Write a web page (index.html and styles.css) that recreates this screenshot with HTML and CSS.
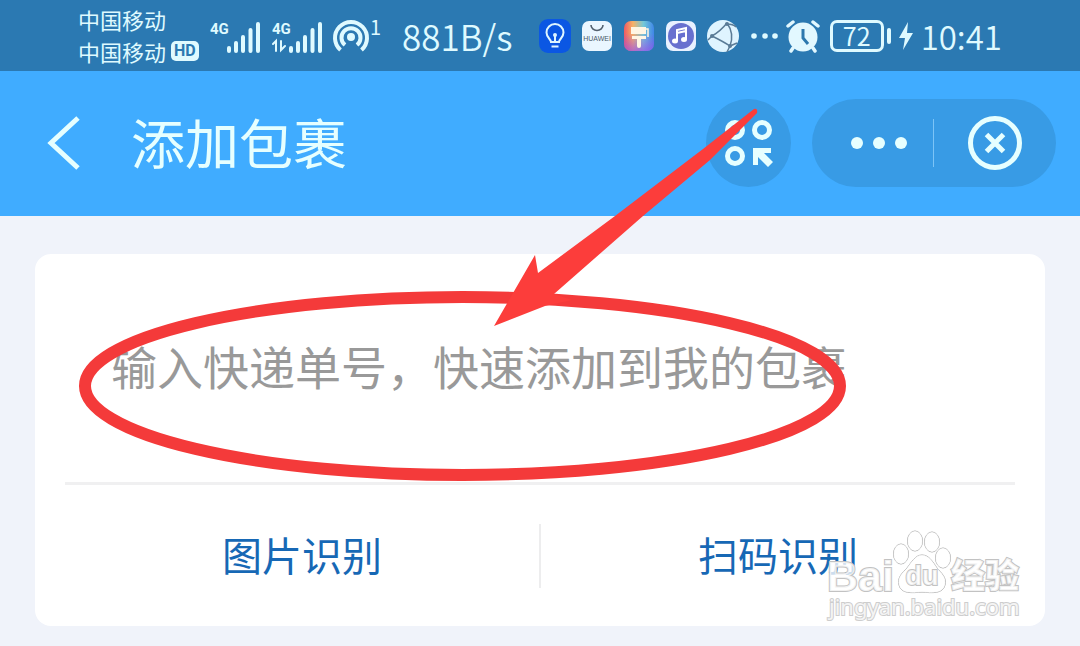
FILE: index.html
```
<!DOCTYPE html>
<html lang="zh-CN">
<head>
    <meta charset="utf-8">
    <meta name="viewport" content="width=device-width, initial-scale=1">
    <title>添加包裹</title>
    <link rel="stylesheet" href="styles.css">
</head>
<body>
    <div class="status-bar">
        <div class="status-left">
            <div class="carriers">
                <div>中国移动</div>
                <div>中国移动 <span class="hd">HD</span></div>
            </div>
            <svg class="signal" width="52" height="34" viewBox="0 0 52 34">
                <text x="0" y="15">4G</text>
                <path d="M19 32v-3M26 32v-8M33 32v-14M40.500 32v-21M48 32v-27"/>
            </svg>
            <svg class="signal" width="52" height="34" viewBox="0 0 52 34">
                <text x="0" y="15">4G</text>
                <path d="M19 32v-3M26 32v-8M33 32v-14M40.500 32v-21M48 32v-27"/>
                <path class="thin" d="M1 25l3-3v10M9 22v9l4-4"/>
            </svg>
            <svg class="hotspot" width="48" height="44" viewBox="0 -4 48 44">
                <path d="M6.500 32a16 16 0 1 1 21 0M11 27a9.500 9.500 0 1 1 12 0"/>
                <circle cx="17" cy="19" r="4"/>
                <text x="36" y="17">1</text>
            </svg>
            <div class="speed">881B/s</div>
        </div>
        <div class="status-right">
            <div class="apps">
                <svg width="32" height="34" viewBox="0 0 32 34">
                    <rect width="32" height="34" rx="9" fill="#0b57e3"/>
                    <path d="M12 23c0-3-4.500-4-4.500-9.500a8.500 8.500 0 0 1 17 0c0 5.500-4.500 6.500-4.500 9.500zM12.500 27.500h7M16 23v-6" fill="none" stroke="#dff6ff" stroke-width="2"/>
                    <circle cx="16" cy="16" r="2" fill="#dff6ff"/>
                </svg>
                <svg width="32" height="34" viewBox="0 0 32 34">
                    <rect x="1" y="2" width="30" height="30" rx="7" fill="#eaf6ff"/>
                    <path d="M10 6a6 5.500 0 0 0 12 0" fill="none" stroke="#52606e" stroke-width="1.600"/>
                    <text x="16" y="22" text-anchor="middle" font-size="7" fill="#4b5a6a">HUAWEI</text>
                </svg>
                <svg width="32" height="34" viewBox="0 0 32 34">
                    <defs>
                        <linearGradient id="hue">
                            <stop offset="0" stop-color="#ee5a62"/>
                            <stop offset=".3" stop-color="#f7b267"/>
                            <stop offset=".65" stop-color="#73c8d8"/>
                            <stop offset="1" stop-color="#3f86e8"/>
                        </linearGradient>
                        <linearGradient id="violet" x2="0" y2="1">
                            <stop offset=".4" stop-color="#9b4bea" stop-opacity="0"/>
                            <stop offset="1" stop-color="#9b4bea" stop-opacity=".7"/>
                        </linearGradient>
                    </defs>
                    <rect x="1" y="2" width="30" height="30" rx="7" fill="url(#hue)"/>
                    <rect x="1" y="2" width="30" height="30" rx="7" fill="url(#violet)"/>
                    <path d="M8 8h15v7H8zM9 17h14v3h-5v7a2 2 0 0 1-4 0v-7H9z" fill="#fff5e4"/>
                    <path d="M22 10h3v8" fill="none" stroke="#fff5e4" stroke-width="1.500"/>
                </svg>
                <svg width="32" height="34" viewBox="0 0 32 34">
                    <rect x="1" y="2" width="30" height="30" rx="7" fill="#e9f1ff"/>
                    <circle cx="16" cy="17" r="13" fill="#6870cf"/>
                    <path d="M12 22V11l9-2v11M12 14l9-2" fill="none" stroke="#fff" stroke-width="2"/>
                    <ellipse cx="10" cy="22" rx="3" ry="2.500" fill="#fff"/>
                    <ellipse cx="19" cy="20.500" rx="3" ry="2.500" fill="#fff"/>
                </svg>
                <svg width="32" height="34" viewBox="0 0 32 34">
                    <circle cx="16" cy="17" r="16" fill="#dff4ff"/>
                    <path d="M20 4C16 9 12 13 5 17M5 17c6 3 12 6 18 10M20 4c5 7 6 15 3 23M20 5c4 0 7 1 9 3M5 17c-2 2-3 3-4 4M23 27l-3 6M23 27l7-3" fill="none" stroke="#5a7b96" stroke-width="1.500"/>
                    <circle cx="20" cy="5" r="2" fill="#5a7b96"/>
                    <circle cx="5" cy="17" r="2" fill="#5a7b96"/>
                    <circle cx="23" cy="27" r="2" fill="#5a7b96"/>
                </svg>
            </div>
            <svg width="28" height="8" viewBox="0 0 28 8" fill="#dffaff">
                <circle cx="4" cy="4" r="2.800"/>
                <circle cx="15" cy="4" r="2.800"/>
                <circle cx="25" cy="4" r="2.800"/>
            </svg>
            <svg width="36" height="34" viewBox="0 0 36 34">
                <circle cx="18" cy="18" r="14.500" fill="#e2f8ff"/>
                <path d="M3 7l5-4M33 7l-5-4M8 29l-2 3M28 29l2 3" stroke="#e2f8ff" stroke-width="3.500" stroke-linecap="round"/>
                <path d="M18 10v9l5 6" fill="none" stroke="#2d78ae" stroke-width="3"/>
            </svg>
            <div class="battery"><span>72</span></div>
            <svg width="16" height="30" viewBox="0 0 16 30">
                <path d="M10 1L1 17h6l-2 12L15 12H9z" fill="#dffaff"/>
            </svg>
            <div class="time">10:41</div>
        </div>
    </div>

    <header class="title-bar">
        <button class="back" aria-label="返回">
            <svg width="34" height="56" viewBox="0 0 34 56">
                <path d="M31 3L4 28l27 25"/>
            </svg>
        </button>
        <h1>添加包裹</h1>
        <button class="round" aria-label="小程序">
            <svg width="50" height="50" viewBox="0 0 50 50">
                <circle cx="11" cy="12" r="7.500"/>
                <circle cx="38" cy="12" r="7.500"/>
                <circle cx="11" cy="38" r="7.500"/>
                <path class="pointer" d="M29 30h18v5h-7l9 9-5 5-10-10v8h-5z"/>
            </svg>
        </button>
        <div class="capsule">
            <button class="more" aria-label="更多">
                <svg width="60" height="14" viewBox="0 0 60 14">
                    <circle cx="8" cy="7" r="6"/>
                    <circle cx="30" cy="7" r="6"/>
                    <circle cx="52" cy="7" r="6"/>
                </svg>
            </button>
            <button class="close" aria-label="关闭">
                <svg width="56" height="56" viewBox="0 0 56 56">
                    <circle cx="28" cy="28" r="24.500"/>
                    <path d="M19.500 19.500l17 17M36.500 19.500l-17 17"/>
                </svg>
            </button>
        </div>
    </header>

    <main class="card">
        <textarea class="number" aria-label="快递单号" placeholder="输入快递单号，快速添加到我的包裹"></textarea>
        <div class="actions">
            <button>图片识别</button>
            <button>扫码识别</button>
        </div>
        <!-- watermark -->
        <svg class="watermark" width="200" height="100" viewBox="0 0 200 100">
            <text class="logo" x="1" y="65">Bai</text>
            <ellipse cx="75" cy="28" rx="7.500" ry="10"/>
            <ellipse cx="89" cy="15" rx="7.500" ry="10"/>
            <ellipse cx="106" cy="16" rx="7.500" ry="10"/>
            <ellipse cx="117" cy="32" rx="7.500" ry="10"/>
            <path d="M96 29c-7 0-11 8-15 13-5 5-10 10-8 17 2 9 13 8 23 7 10 1 21 2 23-7 2-8-4-12-8-17-4-6-8-13-15-13z"/>
            <text class="du" x="96" y="59" text-anchor="middle">du</text>
            <text class="cn" x="125" y="62">经验</text>
            <text class="url" x="3" y="89">jingyan.baidu.com</text>
        </svg>
    </main>

    <!-- red marker: circle round the input and the arrow to it -->
    <svg class="marker" width="1080" height="646" viewBox="0 0 1080 646">
        <ellipse cx="462.500" cy="386" rx="377.500" ry="89"/>
        <path d="M494 326L535 255L538 273L615 216L703 149L754 109Q758 108 757 113L710 160L643 216L554 294L572 300L545 306z"/>
    </svg>
</body>
</html>
```
FILE: styles.css
```
* {
    box-sizing: border-box;
}
body {
    position: relative;
    margin: 0;
    min-height: 100vh;
    overflow-x: hidden;
    background-color: #f0f3fa;
    font-family: "Noto Sans CJK SC", sans-serif;
}
svg {
    display: block;
    flex: none;
}
button {
    display: flex;
    align-items: center;
    justify-content: center;
    border: none;
    padding: 0;
    background: none;
    font-family: inherit;
    cursor: pointer;
}

/* Phone status bar */
.status-bar {
    display: flex;
    justify-content: space-between;
    height: 71px;
    padding: 0 78px;
    background-color: #2b79b2;
    color: #dffaff;
}
.status-left, .status-right {
    display: flex;
    align-items: center;
    height: 71px;
    gap: 10px;
}
.status-right {
    gap: 7px;
}
.carriers {
    width: 122px;
    padding-bottom: 2px;
    font-size: 22px;
    line-height: 32px;
    white-space: nowrap;
}
.carriers div {
    display: flex;
    align-items: center;
    gap: 5px;
}
.hd {
    padding: 0 3px;
    border-radius: 5px;
    background-color: #dffaff;
    color: #2b79b2;
    font-family: Roboto, sans-serif;
    font-size: 16px;
    font-weight: bold;
    line-height: 20px;
}
.signal text {
    fill: #dffaff;
    font-family: Roboto, sans-serif;
    font-size: 15px;
    font-weight: bold;
}
.signal path {
    fill: none;
    stroke: #dffaff;
    stroke-width: 4;
    stroke-linecap: round;
}
.signal .thin {
    stroke-width: 2;
}
.hotspot {
    overflow: visible;
}
.hotspot path {
    fill: none;
    stroke: #dffaff;
    stroke-width: 4;
}
.hotspot circle, .hotspot text {
    fill: #dffaff;
    font-size: 20px;
}
.speed, .time {
    font-size: 35px;
    font-weight: 350;
    line-height: 68px;
    white-space: nowrap;
}
.speed {
    margin-left: 10px;
}
.time {
    font-size: 33px;
}
.apps {
    display: flex;
    gap: 10px;
    margin-right: 4px;
    font-family: "Liberation Sans", sans-serif;
}
.battery {
    display: flex;
    align-items: center;
    gap: 3px;
    margin-left: 2px;
}
.battery span {
    width: 54px;
    height: 32px;
    border: 3px solid #dffaff;
    border-radius: 7px;
    font-size: 25px;
    line-height: 24px;
    text-align: center;
}
.battery::after {
    content: "";
    width: 4px;
    height: 16px;
    border-radius: 2px;
    background-color: #dffaff;
}

/* Title bar */
.title-bar {
    display: flex;
    align-items: center;
    height: 145px;
    padding: 0 24px 2px 47px;
    background-color: #40acff;
}
.title-bar svg {
    fill: none;
    stroke: #e6ffff;
    stroke-width: 5;
}
h1 {
    flex: 1;
    margin: 0 0 0 50px;
    padding-bottom: 2px;
    color: #e6ffff;
    font-size: 54px;
    font-weight: 400;
    line-height: 80px;
}
.round {
    width: 85px;
    height: 88px;
    margin-right: 21px;
    border-radius: 50%;
    background-color: #389be5;
}
.title-bar .pointer {
    fill: #e6ffff;
    stroke: none;
}
.capsule {
    display: flex;
    align-items: center;
    width: 244px;
    height: 88px;
    border-radius: 44px;
    background-color: #389be5;
}
.capsule button {
    flex: 1;
    height: 48px;
}
.capsule .more {
    flex: none;
    width: 122px;
    padding-left: 12px;
    border-right: 1px solid #7cc4f7;
}
.title-bar .more svg {
    fill: #e6ffff;
    stroke: none;
}

/* Parcel number card */
.card {
    position: relative;
    margin: 38px 35px 20px;
    padding: 0 30px;
    border-radius: 16px;
    background-color: #fff;
}
.number {
    display: block;
    width: 100%;
    height: 231px;
    padding: 81px 46px 0;
    border: none;
    border-bottom: 3px solid #f0f0f1;
    outline: none;
    resize: none;
    background: none;
    color: #333;
    font-family: inherit;
    font-size: 46px;
    line-height: 60px;
}
.number::placeholder {
    color: #999;
}
.actions {
    display: flex;
    padding: 39px 0 38px;
}
.actions button {
    flex: 1;
    height: 64px;
    padding-bottom: 4px;
    color: #1768b5;
    font-size: 40px;
}
.actions button + button {
    border-left: 2px solid #ededee;
}

/* Things lying over the page */
.watermark {
    position: absolute;
    right: 19px;
    bottom: 0;
    fill: rgba(255, 255, 255, 0.8);
    stroke: #c2c2c2;
    stroke-width: 2;
    paint-order: stroke;
    pointer-events: none;
}
.watermark ellipse, .watermark path {
    stroke: #a8a8a8;
    stroke-width: 1;
}
.logo, .du {
    font-family: "Liberation Sans", sans-serif;
    font-size: 43px;
    font-weight: bold;
}
.du {
    font-size: 27px;
}
.cn {
    font-size: 34px;
    font-weight: 900;
}
.url {
    font-family: "Noto Sans", sans-serif;
    font-size: 22px;
    stroke: #cdcdcd;
}
.marker {
    position: absolute;
    top: 0;
    left: 0;
    fill: #fc3d3b;
    pointer-events: none;
}
.marker ellipse {
    fill: none;
    stroke: #f43a3a;
    stroke-width: 12;
}
```
